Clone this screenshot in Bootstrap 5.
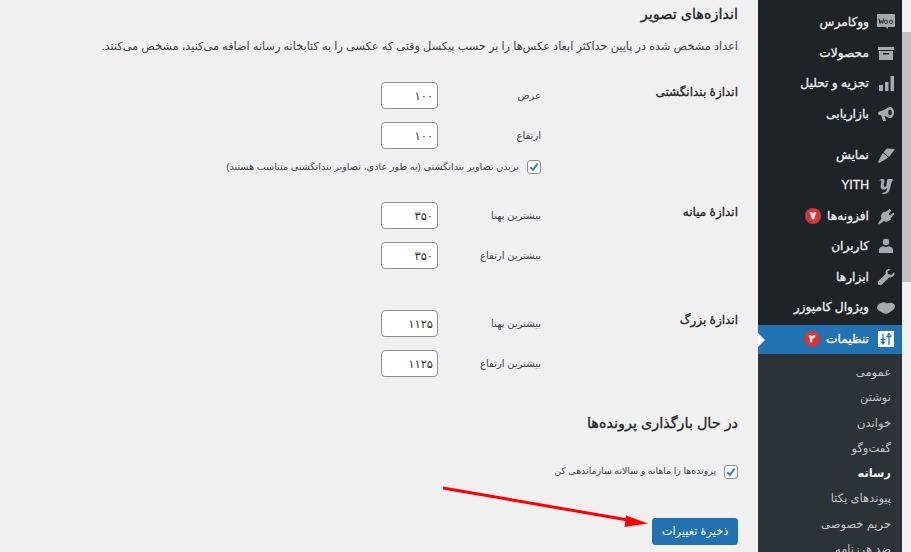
<!DOCTYPE html>
<html lang="fa" dir="rtl">
<head>
  <meta charset="UTF-8">
  <title>تنظیمات رسانه</title>
  <link href="https://cdn.jsdelivr.net/npm/bootstrap@5.3.0/dist/css/bootstrap.min.css" rel="stylesheet">
  <style>
    html, body { height: 552px; overflow: hidden; }
    body { background: #f0f0f1; font-family: "Liberation Sans", "DejaVu Sans", sans-serif; color: #3c434a; font-size: 9.4px; }
    .page-wrap { height: 552px; }
    .scroll-track { width: 9px; background: #f1f1f1; flex: none; }
    .scroll-thumb { height: 250px; margin-top: 32px; background: #c1c1c1; }
    .side-menu { width: 144px; flex: none; background: #1d2327; height: 552px; overflow: hidden; padding-top: 7px; }
    .menu-item { display: flex; align-items: center; height: 30.6px; padding-right: 6px; color: #f0f0f1; font-size: 12.2px; -webkit-text-stroke: .3px currentColor; gap: 7px; text-decoration: none; white-space: nowrap; }
    .menu-item svg { width: 20px; height: 20px; flex: none; fill: #a7aaad; }
    .menu-gap { height: 10px; }
    .menu-item.is-current { background: #2271b1; color: #fff; height: 29px; position: relative; margin-top: 2px; }
    .menu-item.is-current::after { content: ""; position: absolute; left: 0; top: 8px; border: 7px solid transparent; border-left-color: #fff; border-right-width: 0; }
    .count-badge { background: #d63638; color: #fff; width: 16px; height: 16px; font-size: 10px; line-height: 16px; padding: 0; margin-right: -1px; border-radius: 50%; text-align: center; }
    .sub-menu { background: #2c3338; padding-top: 6px; height: 210px; }
    .sub-menu a { display: block; height: 25.3px; line-height: 25px; padding-right: 11px; color: #c3c4c7; font-size: 11.5px; text-decoration: none; white-space: nowrap; }
    .sub-menu a.is-on { color: #fff; font-weight: 700; }
    .main-area { width: 758px; flex: none; padding: 0 20px 0 0; }
    .sec-title { font-size: 14.4px; font-weight: 400; -webkit-text-stroke: .3px currentColor; color: #1d2327; margin: 0; line-height: 20px; }
    .intro-text { font-size: 11.3px; line-height: 16px; margin: 14px 0 0; white-space: nowrap; }
    .size-block { display: flex; }
    .size-name { width: 197px; flex: none; font-size: 12px; -webkit-text-stroke: .3px currentColor; color: #1d2327; line-height: 20px; }
    .field-row { display: flex; align-items: center; height: 27px; margin-bottom: 13px; }
    .field-name { width: 103px; flex: none; font-size: 10px; }
    .num-box { width: 57px; height: 27px; min-height: 0; padding: 0 4px; border: 1px solid #8c8f94; border-radius: 4px; background: #fff; color: #2c3338; font-size: 11.5px; font-family: inherit; text-align: right; box-shadow: none; }
    .tick-row { display: flex; align-items: center; gap: 8px; white-space: nowrap; }
    .tick-row .form-check-input { width: 14px; height: 14px; margin: 0; border: 1px solid #8c8f94; border-radius: 3px; flex: none; background-color: #fff; background-image: url("data:image/svg+xml,%3csvg xmlns='http://www.w3.org/2000/svg' viewBox='0 0 14 14'%3e%3cpath fill='none' stroke='%233582c4' stroke-width='2.4' d='M2.8 7.2l3 3.2 5.4-7.4'/%3e%3c/svg%3e"); }
    .save-btn { background: #2271b1; border: 1px solid #2271b1; color: #fff; width: 86px; height: 27px; padding: 0; font-size: 11.4px; border-radius: 3px; font-family: inherit; }
    .note-arrow { position: absolute; left: 0; top: 0; width: 911px; height: 552px; pointer-events: none; }
    .first-block { margin-top: 28px; }
    .thumb-tick { margin-top: -2px; font-size: 9.65px; }
    .mid-block { margin-top: 28px; }
    .big-block { margin-top: 28px; }
    .upload-title { margin-top: 23px; }
    .upload-tick { margin-top: 31px; }
    .save-row { margin-top: 39px; }
  </style>
</head>
<body class="position-relative">
  <div class="page-wrap d-flex">
    <div class="scroll-track"><div class="scroll-thumb"></div></div>

    <nav class="side-menu">
      <a class="menu-item" href="#"><svg viewBox="0 0 20 20"><path d="M2 2h16a1 1 0 0 1 1 1v11a1 1 0 0 1-1 1h-6l-.5 2.500L10 15H2a1 1 0 0 1-1-1V3a1 1 0 0 1 1-1z"/><path d="M3 6.500l1 5 1.300-3 1.300 3 1-5M10 8a1.600 1.800 0 1 0 .01 0M15 8a1.600 1.800 0 1 0 .01 0" fill="none" stroke="#1d2327" stroke-width="1"/></svg>ووکامرس</a>
      <a class="menu-item" href="#"><svg viewBox="0 0 20 20"><path d="M2 4h16v3H2zM3 8h14v9H3zm4 2v1.500h6V10z" fill-rule="evenodd"/></svg>محصولات</a>
      <a class="menu-item" href="#"><svg viewBox="0 0 20 20"><path d="M3 12h4v6H3zM9 9h3.500v9H9zM14.500 3H18v15h-3.500z"/></svg>تجزیه و تحلیل</a>
      <a class="menu-item" href="#"><svg viewBox="0 0 20 20"><path fill-rule="evenodd" d="M14 3c2.500 0 4 2.500 4 5.500S16.500 14 14 14c-1.500 0-3-1.500-5.500-2L10 17H7l-1.800-5.500C3.500 11 2 10.500 2 9.500 2 8 3 7.500 5 7c4-.8 7-4 9-4zm0 2.500c-1 0-1.700 1.300-1.700 3s.7 3 1.700 3 1.700-1.300 1.700-3-.7-3-1.700-3z"/></svg>بازاریابی</a>
      <div class="menu-gap"></div>
      <a class="menu-item" href="#"><svg viewBox="0 0 20 20"><path d="M19 4l-8-.5-3.500 3.500 5.500 5zM7 8l-1.500 2L2 17l1 1 7-4 2-1.500z"/></svg>نمایش</a>
      <a class="menu-item" href="#"><svg viewBox="0 0 20 20"><path d="M5 4h2.500l1 1-1 6 1 1 2-1.500L11 5l1-1h4l1 1h1l-2 1-2.500 9c-.6 2.500-3 4-5.500 4H5.500l1.800-1.500c2 0 3.200-1 3.500-3l.2-1.500-2 1.500H6L4.500 12l1-6-1-.5-1.500.5z"/></svg>YITH</a>
      <a class="menu-item" href="#"><svg viewBox="0 0 20 20"><path d="M13.500 3l2 1.500-3 3.500 1.500 1.500 3.500-3L18.500 8l-4 4.500 .5 1-2.500 1.500c-1.500 1-3 .8-4.500 0L3 18.500l-1-1 3.500-5c-.8-1.500-.8-3.500.5-5l2-2 1 .8z"/></svg>افزونه‌ها <span class="badge count-badge">۷</span></a>
      <a class="menu-item" href="#"><svg viewBox="0 0 20 20"><circle cx="10" cy="6" r="3.200"/><path d="M3 17v-3.500c0-1.500 2-2.800 4-3.300 2 1 4 1 6 0 2 .5 4 1.800 4 3.300V17z"/></svg>کاربران</a>
      <a class="menu-item" href="#"><svg viewBox="0 0 20 20"><path d="M13 2c-2.500 0-4 2.500-3.200 4.700L2.500 14c-1 1-1 2.500 0 3.500s2.500 1 3.500 0l7.300-7.300C16 11 18.500 9 18.500 6.500c0-.6 0-1-.2-1.500l-3 3-3-1-.8-2.500 3-2.300C14 2 13.500 2 13 2z"/></svg>ابزارها</a>
      <a class="menu-item" href="#"><svg viewBox="0 0 20 20"><path d="M5 5c2.500-1.500 5-.5 6 .5 2-1.200 5-1 7 .5 1.500 1.500 1 4-.5 5.500-2 1.800-4 3-6 4-2 .6-4-.2-6-1.500C3 13 1 11.500 1 9.500 1 7.500 3 6 5 5z"/></svg>ویژوال کامپوزر</a>
      <a class="menu-item is-current" href="#"><svg viewBox="0 0 20 20"><path fill="#fff" d="M2 2h16v16H2z"/><path fill="none" stroke="#2271b1" stroke-width="1.300" d="M7 5v9M13 7v9M4.500 10.500h5M10.500 7.500h5"/><path fill="#2271b1" d="M4.500 12.500h5L7 16zM10.500 6.500h5L13 3.500z"/></svg>تنظیمات <span class="badge count-badge">۲</span></a>
      <div class="sub-menu">
        <a href="#">عمومی</a>
        <a href="#">نوشتن</a>
        <a href="#">خواندن</a>
        <a href="#">گفت‌وگو</a>
        <a href="#" class="is-on">رسانه</a>
        <a href="#">پیوندهای یکتا</a>
        <a href="#">حریم خصوصی</a>
        <a href="#">ضد هرزنامه</a>
      </div>
    </nav>

    <main class="main-area">
      <h2 class="sec-title pt-1">اندازه‌های تصویر</h2>
      <p class="intro-text">اعداد مشخص شده در پایین حداکثر ابعاد عکس‌ها را بر حسب پیکسل وقتی که عکسی را به کتابخانه رسانه اضافه می‌کنید، مشخص می‌کنند.</p>

      <div class="size-block first-block">
        <div class="size-name">اندازهٔ بندانگشتی</div>
        <div>
          <div class="field-row"><label class="field-name">عرض</label><input class="form-control num-box" value="۱۰۰"></div>
          <div class="field-row"><label class="field-name">ارتفاع</label><input class="form-control num-box" value="۱۰۰"></div>
          <label class="tick-row thumb-tick"><input type="checkbox" class="form-check-input" checked>بریدن تصاویر بندانگشتی (به طور عادی، تصاویر بندانگشتی متناسب هستند)</label>
        </div>
      </div>

      <div class="size-block mid-block">
        <div class="size-name">اندازهٔ میانه</div>
        <div>
          <div class="field-row"><label class="field-name">بیشترین پهنا</label><input class="form-control num-box" value="۳۵۰"></div>
          <div class="field-row"><label class="field-name">بیشترین ارتفاع</label><input class="form-control num-box" value="۳۵۰"></div>
        </div>
      </div>

      <div class="size-block big-block">
        <div class="size-name">اندازهٔ بزرگ</div>
        <div>
          <div class="field-row"><label class="field-name">بیشترین پهنا</label><input class="form-control num-box" value="۱۱۲۵"></div>
          <div class="field-row"><label class="field-name">بیشترین ارتفاع</label><input class="form-control num-box" value="۱۱۲۵"></div>
        </div>
      </div>

      <h2 class="sec-title upload-title">در حال بارگذاری پرونده‌ها</h2>
      <label class="tick-row upload-tick"><input type="checkbox" class="form-check-input" checked>پرونده‌ها را ماهانه و سالانه سازماندهی کن</label>
      <div class="save-row"><button class="btn save-btn">ذخیرهٔ تغییرات</button></div>
    </main>
  </div>

  <svg class="note-arrow" viewBox="0 0 911 552"><path d="M443 488L628 520" stroke="#f00" stroke-width="3" fill="none"/><path d="M648 523.500L626 515.500 624.500 527z" fill="#f00"/></svg>
</body>
</html>
